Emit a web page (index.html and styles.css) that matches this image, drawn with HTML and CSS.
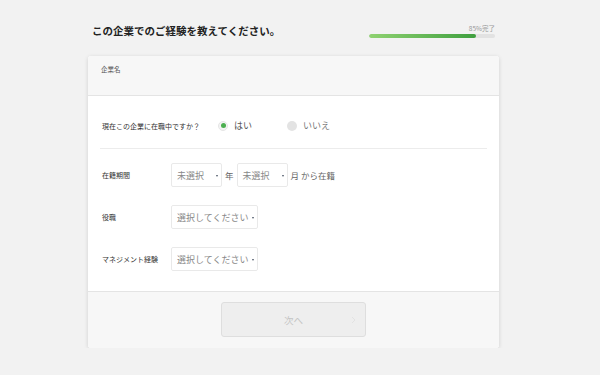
FILE: index.html
```html
<!DOCTYPE html>
<html lang="ja">
<head>
  <meta charset="UTF-8" />
  <meta name="viewport" content="width=device-width, initial-scale=1" />
  <title>職歴入力</title>
  <link rel="stylesheet" href="styles.css">
</head>
<body>
  <div class="page">
    <header class="topbar">
      <h1 class="title">この企業でのご経験を教えてください。</h1>
      <div class="progress">
        <div class="progress-label">85%完了</div>
        <div class="progress-track"><div class="progress-fill"></div></div>
      </div>
    </header>

    <div class="card">
      <div class="card-head">
        <span class="head-label">企業名</span>
      </div>

      <div class="card-body">
        <div class="row row-current">
          <div class="label">現在この企業に在職中ですか？</div>
          <label class="radio checked"><span class="dot"></span>はい</label>
          <label class="radio"><span class="dot"></span>いいえ</label>
        </div>

        <div class="selects">
          <div class="row">
            <div class="label">在籍期間</div>
            <div class="select short">未選択<span class="caret"></span></div>
            <span class="unit">年</span>
            <div class="select short">未選択<span class="caret"></span></div>
            <span class="unit">月 から在籍</span>
          </div>
          <div class="row">
            <div class="label">役職</div>
            <div class="select">選択してください<span class="caret"></span></div>
          </div>
          <div class="row">
            <div class="label">マネジメント経験</div>
            <div class="select">選択してください<span class="caret"></span></div>
          </div>
        </div>
      </div>

      <div class="card-foot">
        <button class="next-btn" disabled>
          次へ
          <svg class="chev" width="5" height="8" viewBox="0 0 5 8"><path d="M1 1l3 3-3 3" fill="none" stroke="#e2e2e2" stroke-width="1"/></svg>
        </button>
      </div>
    </div>
  </div>
</body>
</html>
```

FILE: styles.css
```css
body {
  margin: 0;
  background-color: #f2f2f2;
  font-family: "Noto Sans CJK JP", "Noto Sans", sans-serif;
  color: #333;
}
.page {
  width: 411px;
  margin-left: 88px;
}
.topbar {
  height: 56px;
  display: flex;
  align-items: center;
  justify-content: space-between;
  padding: 4px 4px 0 4px;
  box-sizing: border-box;
}
.title {
  margin: 0;
  font-size: 10.5px;
  font-weight: bold;
  color: #222;
}
.progress {
  width: 126px;
  margin-top: 2px;
}
.progress-label {
  text-align: right;
  font-size: 6.5px;
  line-height: 8px;
  color: #999;
  margin-bottom: 2px;
}
.progress-track {
  height: 4px;
  border-radius: 2px;
  background-color: #e2e2e2;
  overflow: hidden;
}
.progress-fill {
  width: 85%;
  height: 100%;
  background: linear-gradient(90deg, #8fd271, #3f9f3f);
  border-radius: 2px;
}
.card {
  background: white;
  border-radius: 3px;
  box-shadow: 0 1px 4px rgba(0,0,0,0.14);
  overflow: hidden;
}
.card-head {
  height: 40px;
  box-sizing: border-box;
  background-color: #f7f7f7;
  border-bottom: 1px solid #e4e4e4;
  padding: 8px 13px 0;
}
.head-label {
  display: block;
  font-size: 6.5px;
  line-height: 10px;
  color: #555;
}
.card-body {
  padding: 0 12px;
}
.row {
  display: flex;
  align-items: center;
  padding-left: 2px;
}
.row-current {
  padding: 23px 0 16px 2px;
  border-bottom: 1px solid #ececec;
}
.label {
  width: 69px;
  font-size: 7px;
  color: #333;
  flex-shrink: 0;
}
.row-current .label {
  width: 116px;
}
.radio {
  display: flex;
  align-items: center;
  font-size: 9px;
  color: #555;
  margin-right: 35px;
}
.radio .dot {
  width: 10px;
  height: 10px;
  border-radius: 50%;
  box-sizing: border-box;
  background-color: #e3e3e3;
  margin-right: 6px;
  display: flex;
  align-items: center;
  justify-content: center;
}
.radio.checked .dot {
  background-color: #f4f4f4;
  border: 1px solid #e6e6e6;
}
.radio.checked .dot::after {
  content: "";
  width: 5px;
  height: 5px;
  border-radius: 50%;
  background-color: #4caf50;
}
.radio:not(.checked) {
  color: #777;
}
.selects {
  display: flex;
  flex-direction: column;
  gap: 18px;
  padding: 14px 0 20px;
}
.select {
  position: relative;
  width: 87px;
  height: 24px;
  box-sizing: border-box;
  border: 1px solid #e9e9e9;
  border-radius: 2px;
  background: white;
  padding: 0 0 0 5px;
  display: flex;
  align-items: center;
  font-size: 9px;
  color: #888;
  white-space: nowrap;
}
.select.short {
  width: 51px;
}
.caret {
  position: absolute;
  right: 3px;
  top: 11px;
  border-left: 1.5px solid transparent;
  border-right: 1.5px solid transparent;
  border-top: 2.5px solid #4a5466;
}
.unit {
  font-size: 8.5px;
  color: #666;
  margin: 0 3px;
}
.card-foot {
  background-color: #f7f7f7;
  border-top: 1px solid #e4e4e4;
  padding: 10px 0 11px;
  display: flex;
  justify-content: center;
}
.next-btn {
  position: relative;
  width: 145px;
  height: 35px;
  background-color: #eeeeee;
  border: 1px solid #dedede;
  border-radius: 3px;
  font-family: inherit;
  font-size: 9.5px;
  color: #c4c4c4;
}
.chev {
  position: absolute;
  right: 9px;
  top: 13px;
}
```
